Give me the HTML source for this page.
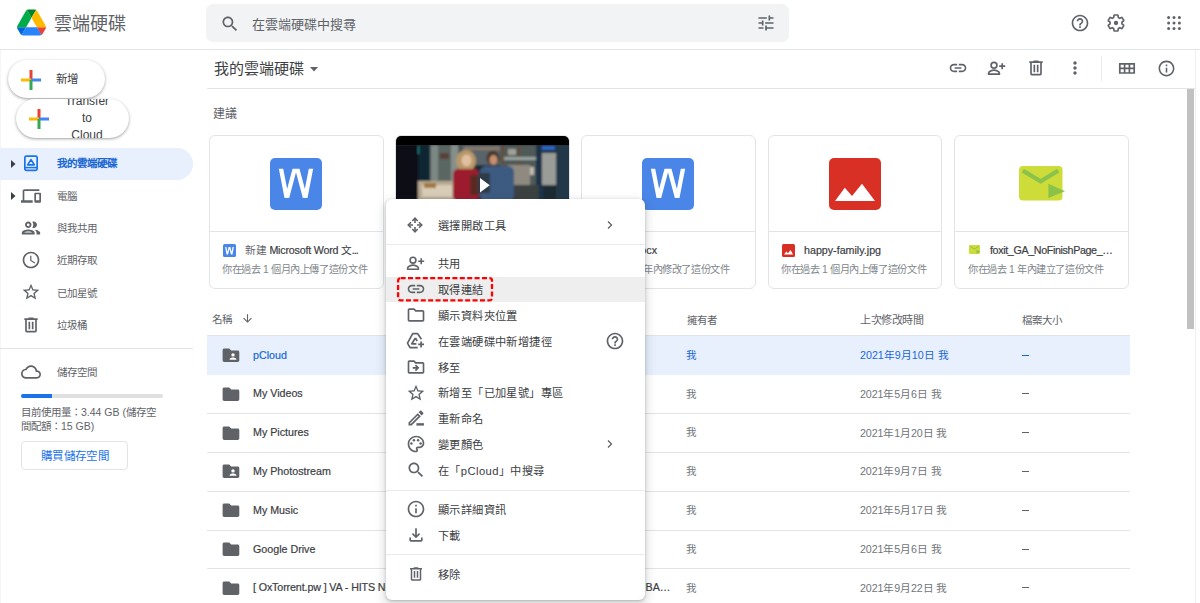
<!DOCTYPE html>
<html lang="zh-TW">
<head>
<meta charset="utf-8">
<style>
*{box-sizing:border-box;margin:0;padding:0}
html,body{width:1200px;height:603px;overflow:hidden;background:#fff}
body{position:relative;font-family:"Liberation Sans",sans-serif;color:#3c4043}
.a{position:absolute}
.t{position:absolute;white-space:nowrap;line-height:1}
svg{position:absolute;display:block}
.ic{fill:#5f6368}
</style>
</head>
<body>
<!-- left edge line -->
<div class="a" style="left:0;top:49px;width:1px;height:554px;background:#f5f5f5"></div>
<!-- header -->
<svg style="left:17px;top:9px" width="29" height="27" viewBox="0 0 87.3 78">
<path d="m6.6 66.85 3.85 6.65c.8 1.4 1.95 2.5 3.3 3.3l13.75-23.8h-27.5c0 1.55.4 3.1 1.2 4.5z" fill="#0066da"/>
<path d="m43.65 25-13.75-23.8c-1.35.8-2.5 1.9-3.3 3.3l-25.4 44a9.06 9.06 0 0 0 -1.2 4.5h27.5z" fill="#00ac47"/>
<path d="m73.55 76.8c1.35-.8 2.5-1.9 3.3-3.3l1.6-2.75 7.65-13.25c.8-1.4 1.2-2.95 1.2-4.5h-27.502l5.852 11.5z" fill="#ea4335"/>
<path d="m43.65 25 13.75-23.8c-1.35-.8-2.9-1.2-4.5-1.2h-18.5c-1.6 0-3.15.45-4.5 1.2z" fill="#00832d"/>
<path d="m59.8 53h-32.3l-13.75 23.8c1.35.8 2.9 1.2 4.5 1.2h50.8c1.6 0 3.15-.45 4.5-1.2z" fill="#2684fc"/>
<path d="m73.4 26.5-12.7-22c-.8-1.4-1.95-2.5-3.3-3.3l-13.75 23.8 16.15 28h27.45c0-1.55-.4-3.1-1.2-4.5z" fill="#ffba00"/>
</svg>
<div class="t" style="left:54px;top:14.5px;font-size:18px;color:#5f6368">雲端硬碟</div>

<div class="a" style="left:206px;top:4px;width:583px;height:38px;background:#f1f3f4;border-radius:7px"></div>
<svg style="left:219.5px;top:13.5px" width="20" height="20" viewBox="0 0 24 24"><path class="ic" d="M15.5 14h-.79l-.28-.27C15.41 12.59 16 11.11 16 9.5 16 5.91 13.09 3 9.5 3S3 5.91 3 9.5 5.91 16 9.5 16c1.61 0 3.090-.59 4.23-1.57l.27.28v.79l5 4.99L20.49 19l-4.99-5zm-6 0C7.01 14 5 11.99 5 9.5S7.010 5 9.5 5 14 7.01 14 9.5 11.99 14 9.5 14z"/></svg>
<div class="t" style="left:252px;top:17.5px;font-size:13px;color:#5f6368">在雲端硬碟中搜尋</div>
<svg style="left:756px;top:13px" width="20" height="20" viewBox="0 0 24 24"><path class="ic" d="M3 17v2h6v-2H3zM3 5v2h10V5H3zm10 16v-2h8v-2h-8v-2h-2v6h2zM7 9v2H3v2h4v2h2V9H7zm14 4v-2H11v2h10zm-6-4h2V7h4V5h-4V3h-2v6z"/></svg>

<svg style="left:1070px;top:13px" width="20" height="20" viewBox="0 0 24 24"><path class="ic" d="M11 18h2v-2h-2v2zm1-16C6.48 2 2 6.48 2 12s4.48 10 10 10 10-4.48 10-10S17.52 2 12 2zm0 18c-4.41 0-8-3.59-8-8s3.59-8 8-8 8 3.59 8 8-3.590 8-8 8zm0-14c-2.21 0-4 1.79-4 4h2c0-1.1.9-2 2-2s2 .9 2 2c0 2-3 1.75-3 5h2c0-2.25 3-2.5 3-5 0-2.21-1.79-4-4-4z"/></svg>
<svg style="left:1106px;top:13px" width="20" height="20" viewBox="0 0 24 24"><path fill="none" stroke="#5f6368" stroke-width="2" d="M19.14 12.94c.04-.3.06-.61.06-.94 0-.32-.02-.64-.07-.94l2.03-1.58c.18-.14.23-.41.12-.61l-1.92-3.32c-.12-.22-.37-.29-.59-.22l-2.39.96c-.5-.38-1.03-.7-1.62-.94l-.36-2.54c-.04-.24-.24-.41-.48-.41h-3.84c-.24 0-.43.17-.47.41l-.36 2.540c-.59.24-1.13.57-1.62.94l-2.39-.96c-.22-.08-.47 0-.59.22L2.74 8.87c-.12.21-.08.47.12.61l2.03 1.58c-.05.3-.09.63-.09.94s.02.64.07.94l-2.03 1.58c-.18.14-.23.41-.12.61l1.92 3.32c.12.22.37.29.59.22l2.39-.96c.5.38 1.03.7 1.62.94l.36 2.54c.05.24.24.41.48.41h3.84c.24 0 .44-.17.47-.41l.36-2.54c.59-.24 1.13-.56 1.62-.94l2.39.96c.22.08.47 0 .59-.22l1.92-3.32c.12-.22.07-.47-.12-.61l-2.01-1.58z"/><circle cx="12" cy="12" r="2.6" fill="#5f6368"/></svg>
<svg style="left:1167px;top:16px" width="14" height="14" viewBox="0 0 14 14" fill="#5f6368"><circle cx="1.6" cy="1.6" r="1.5"/><circle cx="7" cy="1.6" r="1.5"/><circle cx="12.4" cy="1.6" r="1.5"/><circle cx="1.6" cy="7" r="1.5"/><circle cx="7" cy="7" r="1.5"/><circle cx="12.4" cy="7" r="1.5"/><circle cx="1.6" cy="12.4" r="1.5"/><circle cx="7" cy="12.4" r="1.5"/><circle cx="12.4" cy="12.4" r="1.5"/></svg>

<div class="a" style="left:0;top:49px;width:1200px;height:1px;background:#e2e4e7"></div>

<!-- SIDEBAR -->
<!-- new button -->
<div class="a" style="left:8px;top:60px;width:97px;height:38px;border-radius:19px;background:#fff;box-shadow:0 1px 2px 0 rgba(60,64,67,.30),0 1px 3px 1px rgba(60,64,67,.15)"></div>
<svg style="left:21px;top:70px" width="20" height="20" viewBox="0 0 20 20"><rect x="8.5" y="0" width="3" height="10" fill="#ea4335"/><rect x="0" y="8.5" width="10" height="3" fill="#fbbc04"/><rect x="10" y="8.5" width="10" height="3" fill="#4285f4"/><rect x="8.5" y="10" width="3" height="10" fill="#34a853"/></svg>
<div class="t" style="left:56px;top:74px;font-size:11.5px;color:#3c4043">新增</div>
<!-- transfer button -->
<div class="a" style="left:16px;top:99px;width:113px;height:39px;border-radius:20px;background:#fff;box-shadow:0 1px 2px 0 rgba(60,64,67,.30),0 1px 3px 1px rgba(60,64,67,.15);overflow:hidden">
<div style="position:absolute;left:40px;top:-6.1px;width:62px;text-align:center;font-size:12px;line-height:17.2px;color:#3c4043">Transfer<br>to<br>Cloud</div>
</div>
<svg style="left:29px;top:109px" width="20" height="20" viewBox="0 0 20 20"><rect x="8.5" y="0" width="3" height="10" fill="#ea4335"/><rect x="0" y="8.5" width="10" height="3" fill="#fbbc04"/><rect x="10" y="8.5" width="10" height="3" fill="#4285f4"/><rect x="8.5" y="10" width="3" height="10" fill="#34a853"/></svg>

<!-- nav -->
<div class="a" style="left:0;top:148px;width:193px;height:32px;background:#e8f0fe;border-radius:0 16px 16px 0"></div>
<svg style="left:10px;top:159px" width="6" height="10" viewBox="0 0 6 10"><path d="M1 1l4.5 4L1 9z" fill="#3c4043"/></svg>
<svg style="left:23px;top:154px" width="16" height="18" viewBox="0 0 16 18"><rect x="1.85" y="2.05" width="12.3" height="14.4" rx="1.6" fill="none" stroke="#1a73e8" stroke-width="1.7"/><path d="M1.85 13.6h12.3" stroke="#1a73e8" stroke-width="1.5"/><path d="M8 5.6L11.3 10.9H4.7z" fill="none" stroke="#1a73e8" stroke-width="1.7" stroke-linejoin="round"/></svg>
<div class="t" style="left:57px;top:158px;font-size:10.5px;color:#1967d2;font-weight:700">我的雲端硬碟</div>

<svg style="left:10px;top:191px" width="6" height="10" viewBox="0 0 6 10"><path d="M1 1l4.5 4L1 9z" fill="#3c4043"/></svg>
<svg style="left:21px;top:186px" width="20" height="20" viewBox="0 0 24 24"><path class="ic" d="M4 6h18V4H4c-1.1 0-2 .9-2 2v11H0v3h14v-3H4V6zm19 2h-6c-.55 0-1 .45-1 1v10c0 .55.45 1 1 1h6c.55 0 1-.45 1-1V9c0-.55-.45-1-1-1zm-1 9h-4v-7h4v7z"/></svg>
<div class="t" style="left:57px;top:191px;font-size:10.5px;color:#5f6368">電腦</div>

<svg style="left:20px;top:217px" width="22" height="22" viewBox="0 0 24 24"><path class="ic" d="M9 13.75c-2.34 0-7 1.17-7 3.5V19h14v-1.75c0-2.33-4.66-3.5-7-3.5zM4.34 17c.84-.58 2.87-1.25 4.66-1.25s3.82.67 4.66 1.25H4.34zM9 12c1.93 0 3.5-1.57 3.5-3.5S10.93 5 9 5 5.5 6.57 5.5 8.5 7.07 12 9 12zm0-5c.83 0 1.5.67 1.5 1.5S9.83 10 9 10s-1.5-.67-1.5-1.5S8.17 7 9 7zm7.04 6.81c1.16.84 1.96 1.96 1.96 3.44V19h4v-1.75c0-2.02-3.5-3.17-5.96-3.44zM15 12c1.93 0 3.5-1.57 3.5-3.5S16.93 5 15 5c-.54 0-1.04.13-1.5.35.63.89 1 1.98 1 3.15s-.37 2.26-1 3.15c.46.22.96.35 1.5.35z"/></svg>
<div class="t" style="left:57px;top:223px;font-size:10.5px;color:#5f6368">與我共用</div>

<svg style="left:21px;top:250px" width="20" height="20" viewBox="0 0 24 24"><path class="ic" d="M11.99 2C6.47 2 2 6.48 2 12s4.47 10 9.99 10C17.52 22 22 17.52 22 12S17.52 2 11.99 2zM12 20c-4.42 0-8-3.58-8-8s3.58-8 8-8 8 3.58 8 8-3.58 8-8 8zm.5-13H11v6l5.25 3.15.75-1.23-4.5-2.67z"/></svg>
<div class="t" style="left:57px;top:255px;font-size:10.5px;color:#5f6368">近期存取</div>

<svg style="left:21px;top:282px" width="20" height="20" viewBox="0 0 24 24"><path class="ic" d="M22 9.24l-7.19-.62L12 2 9.19 8.63 2 9.24l5.46 4.73L5.82 21 12 17.27 18.18 21l-1.63-7.03L22 9.24zM12 15.4l-3.76 2.27 1-4.28-3.32-2.88 4.38-.38L12 6.1l1.71 4.04 4.38.38-3.32 2.88 1 4.28L12 15.4z"/></svg>
<div class="t" style="left:57px;top:288px;font-size:10.5px;color:#5f6368">已加星號</div>

<svg style="left:21px;top:315px" width="20" height="20" viewBox="0 0 24 24"><path class="ic" d="M15 4V3H9v1H4v2h1v13c0 1.1.9 2 2 2h10c1.1 0 2-.9 2-2V6h1V4h-5zm2 15H7V6h10v13zM9 8h2v9H9zm4 0h2v9h-2z"/></svg>
<div class="t" style="left:57px;top:320px;font-size:10.5px;color:#5f6368">垃圾桶</div>

<div class="a" style="left:0;top:348px;width:193px;height:1px;background:#e2e4e7"></div>

<svg style="left:21px;top:362px" width="20" height="20" viewBox="0 0 24 24"><path class="ic" d="M19.35 10.04C18.67 6.59 15.64 4 12 4 9.11 4 6.6 5.64 5.35 8.04 2.34 8.36 0 10.91 0 14c0 3.31 2.69 6 6 6h13c2.76 0 5-2.24 5-5 0-2.64-2.05-4.78-4.65-4.96zM19 18H6c-2.21 0-4-1.79-4-4 0-2.05 1.53-3.76 3.56-3.97l1.07-.11.5-.95C8.08 7.14 9.94 6 12 6c2.62 0 4.88 1.86 5.39 4.43l.3 1.5 1.53.11c1.56.1 2.78 1.41 2.78 2.96 0 1.65-1.35 3-3 3z"/></svg>
<div class="t" style="left:57px;top:367px;font-size:10.5px;color:#5f6368">儲存空間</div>
<div class="a" style="left:21px;top:394px;width:142px;height:4px;background:#e0e0e0;border-radius:2px"></div>
<div class="a" style="left:21px;top:394px;width:31px;height:4px;background:#1a73e8;border-radius:2px 0 0 2px"></div>
<div class="t" style="left:21px;top:405px;font-size:10.5px;line-height:14px;color:#5f6368">目前使用量：3.44 GB (儲存空<br>間配額：15 GB)</div>
<div class="a" style="left:21px;top:441px;width:107px;height:29px;border:1px solid #e2e4e7;border-radius:4px"></div>
<div class="t" style="left:41px;top:451px;font-size:11.5px;letter-spacing:0.35px;color:#1a73e8">購買儲存空間</div>

<!-- MAIN -->
<!-- title row -->
<div class="t" style="left:214px;top:61px;font-size:15px;color:#3c4043">我的雲端硬碟</div>
<svg style="left:308px;top:65px" width="12" height="8" viewBox="0 0 12 8"><path d="M2 2h8l-4 4.5z" fill="#5f6368"/></svg>
<svg style="left:948px;top:58px" width="20" height="20" viewBox="0 0 24 24"><path class="ic" d="M3.9 12c0-1.71 1.39-3.1 3.1-3.1h4V7H7c-2.76 0-5 2.24-5 5s2.24 5 5 5h4v-1.9H7c-1.71 0-3.1-1.39-3.1-3.1zM8 13h8v-2H8v2zm9-6h-4v1.9h4c1.71 0 3.1 1.39 3.1 3.1s-1.39 3.1-3.1 3.1h-4V17h4c2.76 0 5-2.24 5-5s-2.24-5-5-5z"/></svg>
<svg style="left:987px;top:59px" width="20" height="20" viewBox="0 0 20 20"><circle cx="7" cy="6.2" r="2.9" fill="none" stroke="#5f6368" stroke-width="1.7"/><path d="M1.6 15.2v-1c0-1.9 3.6-3.1 5.4-3.1s5.4 1.2 5.4 3.1v1z" fill="none" stroke="#5f6368" stroke-width="1.7" stroke-linejoin="round"/><path d="M15.2 4.2v6M12.2 7.2h6" stroke="#5f6368" stroke-width="1.7"/></svg>
<svg style="left:1026px;top:58px" width="20" height="20" viewBox="0 0 24 24"><path class="ic" d="M15 4V3H9v1H4v2h1v13c0 1.1.9 2 2 2h10c1.1 0 2-.9 2-2V6h1V4h-5zm2 15H7V6h10v13zM9 8h2v9H9zm4 0h2v9h-2z"/></svg>
<svg style="left:1065px;top:58px" width="20" height="20" viewBox="0 0 24 24"><path class="ic" d="M12 8c1.1 0 2-.9 2-2s-.9-2-2-2-2 .9-2 2 .9 2 2 2zm0 2c-1.1 0-2 .9-2 2s.9 2 2 2 2-.9 2-2-.9-2-2-2zm0 6c-1.1 0-2 .9-2 2s.9 2 2 2 2-.9 2-2-.9-2-2-2z"/></svg>
<div class="a" style="left:1101px;top:56px;width:1px;height:25px;background:#e8eaed"></div>
<svg style="left:1118px;top:62px" width="18" height="13" viewBox="0 0 18 13"><path d="M1.8 1.8h14.4v9.2H1.8zM1.8 6.4h14.4M6.6 1.8v9.2M11.4 1.8v9.2" fill="none" stroke="#5f6368" stroke-width="1.7"/></svg>
<svg style="left:1156.5px;top:58.5px" width="19" height="19" viewBox="0 0 24 24"><path class="ic" d="M11 7h2v2h-2zm0 4h2v6h-2zm1-9C6.48 2 2 6.48 2 12s4.48 10 10 10 10-4.48 10-10S17.52 2 12 2zm0 18c-4.41 0-8-3.59-8-8s3.59-8 8-8 8 3.59 8 8-3.59 8-8 8z"/></svg>
<div class="a" style="left:207px;top:88px;width:988px;height:1px;background:#e2e4e7"></div>
<div class="a" style="left:1195px;top:50px;width:1px;height:553px;background:#f0f0f0"></div>
<div class="a" style="left:1187px;top:89px;width:7px;height:240px;background:#c1c1c1"></div>

<div class="t" style="left:213px;top:108px;font-size:12px;color:#5f6368">建議</div>

<!-- cards -->
<div class="a card" style="left:209px;top:135px;width:175px;height:154px;border:1px solid #e2e4e7;border-radius:6px"></div>
<div class="a" style="left:209px;top:231px;width:175px;height:1px;background:#e2e4e7"></div>
<svg style="left:270px;top:158px" width="52" height="52" viewBox="0 0 52 52"><defs><clipPath id="wc270"><rect x="0" y="10.7" width="52" height="29.2"/></clipPath></defs><rect width="52" height="52" rx="5" fill="#4a86e8"/><polyline clip-path="url(#wc270)" points="10.1,6 16.8,40.5 26,6 35.2,40.5 41.9,6" fill="none" stroke="#fff" stroke-width="4.3" stroke-linejoin="miter"/></svg>
<svg style="left:223px;top:244px" width="13" height="13" viewBox="0 0 13 13"><defs><clipPath id="wcs"><rect x="0" y="3" width="13" height="7.5"/></clipPath></defs><rect width="13" height="13" rx="1.5" fill="#4a86e8"/><polyline clip-path="url(#wcs)" points="2.6,2 4.3,11 6.5,2 8.7,11 10.4,2" fill="none" stroke="#fff" stroke-width="1.3"/></svg>
<div class="t" style="left:245px;top:245px;font-size:10.7px;letter-spacing:-0.2px;color:#3c4043;font-weight:500;-webkit-text-stroke:0.2px #3c4043"><span style="color:#5f6368;-webkit-text-stroke:0">新建</span> Microsoft Word <span style="-webkit-text-stroke:0">文</span><span style="letter-spacing:-1px">...</span></div>
<div class="t" style="left:222px;top:265px;font-size:10.2px;letter-spacing:-0.35px;color:#80868b">你在過去 1 個月內上傳了這份文件</div>

<div class="a" style="left:581px;top:135px;width:175px;height:154px;border:1px solid #e2e4e7;border-radius:6px"></div>
<div class="a" style="left:581px;top:231px;width:175px;height:1px;background:#e2e4e7"></div>
<svg style="left:642px;top:158px" width="52" height="52" viewBox="0 0 52 52"><defs><clipPath id="wc642"><rect x="0" y="10.7" width="52" height="29.2"/></clipPath></defs><rect width="52" height="52" rx="5" fill="#4a86e8"/><polyline clip-path="url(#wc642)" points="10.1,6 16.8,40.5 26,6 35.2,40.5 41.9,6" fill="none" stroke="#fff" stroke-width="4.3" stroke-linejoin="miter"/></svg>
<div class="t" style="left:557px;top:245px;width:100px;text-align:right;font-size:10.7px;color:#3c4043;font-weight:500;-webkit-text-stroke:0.2px #3c4043">報告文件.docx</div>
<div class="t" style="left:594px;top:265px;font-size:10.2px;letter-spacing:-0.35px;color:#80868b">你在過去 1 年內修改了這份文件</div>

<div class="a" style="left:768px;top:135px;width:174px;height:154px;border:1px solid #e2e4e7;border-radius:6px"></div>
<div class="a" style="left:768px;top:231px;width:174px;height:1px;background:#e2e4e7"></div>
<svg style="left:829px;top:158px" width="52" height="52" viewBox="0 0 52 52"><rect width="52" height="52" rx="5" fill="#d93025"/><path d="M6 43L15.8 29.8 23 38 33 25.7 46 43z" fill="#fff"/></svg>
<svg style="left:782px;top:244px" width="13" height="13" viewBox="0 0 13 13"><rect width="13" height="13" rx="1.5" fill="#d93025"/><path d="M2 10.5L4.3 7.5 6 9.3 8.6 6 11 10.5z" fill="#fff"/></svg>
<div class="t" style="left:804px;top:245px;font-size:10.7px;color:#3c4043;font-weight:500;-webkit-text-stroke:0.2px #3c4043">happy-family.jpg</div>
<div class="t" style="left:781px;top:265px;font-size:10.2px;letter-spacing:-0.35px;color:#80868b">你在過去 1 個月內上傳了這份文件</div>

<div class="a" style="left:954px;top:135px;width:175px;height:154px;border:1px solid #e2e4e7;border-radius:6px"></div>
<div class="a" style="left:954px;top:231px;width:175px;height:1px;background:#e2e4e7"></div>
<svg style="left:1019px;top:166px" width="47" height="35" viewBox="0 0 47 35"><rect x="0" y="0" width="43.5" height="34.4" rx="4" fill="#cddc39"/><path d="M3.8 4.6L21.7 15.3 39.2 4.6" fill="none" stroke="#8bc34a" stroke-width="4.2"/><path d="M29.4 17.7L46 25.3 29.4 32z" fill="#8bc34a"/></svg>
<svg style="left:969px;top:245px" width="12" height="10" viewBox="0 0 12 10"><rect width="11" height="9" rx="1.2" fill="#cddc39"/><path d="M1.2 1.3L5.5 4 9.8 1.3" fill="none" stroke="#8bc34a" stroke-width="1"/><path d="M7.5 4.8L11.5 6.8 7.5 8.6z" fill="#8bc34a"/></svg>
<div class="t" style="left:990px;top:245px;font-size:10.7px;letter-spacing:-0.35px;color:#3c4043;font-weight:500;-webkit-text-stroke:0.2px #3c4043">foxit_GA_NoFinishPage_…</div>
<div class="t" style="left:968px;top:265px;font-size:10.2px;letter-spacing:-0.35px;color:#80868b">你在過去 1 年內建立了這份文件</div>

<!-- video card -->
<div class="a" style="left:395px;top:135px;width:175px;height:154px;border:1px solid #e2e4e7;border-radius:6px;overflow:hidden">
<div class="a" style="left:0;top:0;width:175px;height:64px;background:#000"></div>
<svg style="left:0;top:9.4px" width="175" height="54.6" viewBox="0 0 175 54.6"><defs><filter id="vb" x="-5%" y="-5%" width="110%" height="110%"><feGaussianBlur stdDeviation="0.9"/></filter></defs>
<g filter="url(#vb)">
<rect x="-2" y="-2" width="180" height="60" fill="#1e2a30"/>
<rect x="10" y="0" width="28" height="40" fill="#0f2530"/>
<rect x="11" y="1" width="12" height="8" fill="#2f8a8a"/>
<rect x="34" y="0" width="30" height="36" fill="#5a6662"/>
<rect x="35" y="0" width="7" height="38" fill="#7c8884"/>
<rect x="55" y="0" width="7" height="36" fill="#85908a"/>
<rect x="44" y="8" width="9" height="6" fill="#5a4038"/>
<rect x="65" y="0" width="40" height="20" fill="#59636a"/>
<rect x="68" y="2" width="36" height="3" fill="#8a7a66"/>
<rect x="104" y="0" width="36" height="42" fill="#4f5a58"/><rect x="106" y="0" width="2" height="20" fill="#6a4a30"/><rect x="122" y="0" width="2" height="20" fill="#6a4a30"/><rect x="112" y="4" width="8" height="6" fill="#a0a098"/><rect x="126" y="22" width="12" height="8" fill="#c0bab0"/>
<rect x="108" y="12" width="32" height="3" fill="#9aa5a0"/>
<rect x="112" y="20" width="22" height="22" fill="#8f8a80"/>
<rect x="140" y="0" width="8" height="54" fill="#1a3048"/>
<rect x="146" y="1" width="13" height="4" fill="#2a66c0"/>
<rect x="146" y="8" width="14" height="32" fill="#9a9c98"/>
<rect x="160" y="0" width="15" height="54" fill="#24384a"/>
<rect x="18" y="36" width="42" height="20" fill="#b8a890"/>
<rect x="26" y="40" width="30" height="12" fill="#d8ccb8"/>
<rect x="28" y="38" width="12" height="5" fill="#a07840"/>
<rect x="-2" y="0" width="24" height="56" fill="#0a0f16"/>
<ellipse cx="70" cy="16" rx="10" ry="11" fill="#b89868"/>
<ellipse cx="70.5" cy="15.5" rx="5" ry="6" fill="#e0c0a0"/>
<rect x="57" y="24" width="26" height="32" rx="5" fill="#9c1f2e"/>
<rect x="74" y="30" width="10" height="20" fill="#5a2a22"/>
<ellipse cx="97" cy="13" rx="6.5" ry="7" fill="#4a3428"/>
<ellipse cx="97.5" cy="15" rx="4" ry="5" fill="#c49070"/>
<rect x="84" y="21" width="34" height="36" rx="6" fill="#3d5a80"/>
<rect x="82" y="28" width="12" height="20" fill="#2e3a48"/>
<rect x="118" y="40" width="25" height="16" fill="#3a4040"/>
</g></svg>
<svg style="left:83.5px;top:41.5px" width="11" height="15" viewBox="0 0 11 15"><path d="M0 0L9.8 7.2 0 14.4z" fill="#fff"/></svg>
</div>
<div class="a" style="left:395px;top:231px;width:175px;height:1px;background:#e2e4e7"></div>
<div class="t" style="left:212px;top:314px;font-size:10.5px;color:#5f6368">名稱</div>
<svg style="left:241px;top:312px" width="13" height="13" viewBox="0 0 24 24"><path d="M20 12l-1.41-1.41L13 16.17V4h-2v12.17l-5.58-5.59L4 12l8 8 8-8z" fill="#5f6368"/></svg>
<div class="t" style="left:687px;top:314.5px;font-size:10.5px;color:#5f6368">擁有者</div>
<div class="t" style="left:860px;top:314.5px;font-size:11px;letter-spacing:-0.4px;color:#5f6368">上次修改時間</div>
<div class="t" style="left:1022px;top:314.5px;font-size:10.5px;color:#5f6368">檔案大小</div>

<div class="a" style="left:207px;top:334.5px;width:923px;height:40px;background:#e8f0fe;border-top:1px solid #e2e4e7"></div>
<svg style="left:222px;top:347.0px" width="18" height="16" viewBox="0 0 18 16"><path d="M7.2 1.5H2.2C1.3 1.5.6 2.2.6 3.1v10.2c0 .9.7 1.6 1.6 1.6h13.5c.9 0 1.6-.7 1.6-1.6V5.2c0-.9-.7-1.6-1.6-1.6H9.2z" fill="#5f6368"/><circle cx="11" cy="7.9" r="1.7" fill="#fff"/><path d="M7.6 12.8v-.6c0-1.1 2.3-1.7 3.4-1.7s3.4.6 3.4 1.7v.6z" fill="#fff"/></svg>
<div class="t" style="left:253px;top:349.5px;font-size:10.7px;color:#1967d2;font-weight:500;-webkit-text-stroke:0.2px #1967d2">pCloud</div>
<div class="t" style="left:686px;top:349.8px;font-size:10.5px;color:#1967d2">我</div>
<div class="t" style="left:860px;top:350.0px;font-size:10.7px;color:#1967d2">2021年9月10日 我</div>
<div class="a" style="left:1022px;top:354.5px;width:6.5px;height:1px;background:#1967d2"></div>

<svg style="left:222px;top:385.8px" width="18" height="16" viewBox="0 0 18 16"><path d="M7.2 1.5H2.2C1.3 1.5.6 2.2.6 3.1v10.2c0 .9.7 1.6 1.6 1.6h13.5c.9 0 1.6-.7 1.6-1.6V5.2c0-.9-.7-1.6-1.6-1.6H9.2z" fill="#5f6368"/></svg>
<div class="t" style="left:253px;top:388.3px;font-size:10.7px;color:#3c4043;font-weight:500;-webkit-text-stroke:0.2px #3c4043">My Videos</div>
<div class="t" style="left:686px;top:388.6px;font-size:10.5px;color:#70757a">我</div>
<div class="t" style="left:860px;top:388.8px;font-size:10.7px;letter-spacing:-0.1px;color:#70757a">2021年5月6日 我</div>
<div class="a" style="left:1022px;top:393.3px;width:6.5px;height:1px;background:#5f6368"></div>
<div class="a" style="left:207px;top:413.1px;width:923px;height:1px;background:#e2e4e7"></div>
<svg style="left:222px;top:424.6px" width="18" height="16" viewBox="0 0 18 16"><path d="M7.2 1.5H2.2C1.3 1.5.6 2.2.6 3.1v10.2c0 .9.7 1.6 1.6 1.6h13.5c.9 0 1.6-.7 1.6-1.6V5.2c0-.9-.7-1.6-1.6-1.6H9.2z" fill="#5f6368"/></svg>
<div class="t" style="left:253px;top:427.1px;font-size:10.7px;color:#3c4043;font-weight:500;-webkit-text-stroke:0.2px #3c4043">My Pictures</div>
<div class="t" style="left:686px;top:427.4px;font-size:10.5px;color:#70757a">我</div>
<div class="t" style="left:860px;top:427.6px;font-size:10.7px;letter-spacing:-0.1px;color:#70757a">2021年1月20日 我</div>
<div class="a" style="left:1022px;top:432.1px;width:6.5px;height:1px;background:#5f6368"></div>
<div class="a" style="left:207px;top:451.9px;width:923px;height:1px;background:#e2e4e7"></div>
<svg style="left:222px;top:463.4px" width="18" height="16" viewBox="0 0 18 16"><path d="M7.2 1.5H2.2C1.3 1.5.6 2.2.6 3.1v10.2c0 .9.7 1.6 1.6 1.6h13.5c.9 0 1.6-.7 1.6-1.6V5.2c0-.9-.7-1.6-1.6-1.6H9.2z" fill="#5f6368"/><circle cx="11" cy="7.9" r="1.7" fill="#fff"/><path d="M7.6 12.8v-.6c0-1.1 2.3-1.7 3.4-1.7s3.4.6 3.4 1.7v.6z" fill="#fff"/></svg>
<div class="t" style="left:253px;top:465.9px;font-size:10.7px;color:#3c4043;font-weight:500;-webkit-text-stroke:0.2px #3c4043">My Photostream</div>
<div class="t" style="left:686px;top:466.2px;font-size:10.5px;color:#70757a">我</div>
<div class="t" style="left:860px;top:466.4px;font-size:10.7px;letter-spacing:-0.1px;color:#70757a">2021年9月7日 我</div>
<div class="a" style="left:1022px;top:470.9px;width:6.5px;height:1px;background:#5f6368"></div>
<div class="a" style="left:207px;top:490.7px;width:923px;height:1px;background:#e2e4e7"></div>
<svg style="left:222px;top:502.2px" width="18" height="16" viewBox="0 0 18 16"><path d="M7.2 1.5H2.2C1.3 1.5.6 2.2.6 3.1v10.2c0 .9.7 1.6 1.6 1.6h13.5c.9 0 1.6-.7 1.6-1.6V5.2c0-.9-.7-1.6-1.6-1.6H9.2z" fill="#5f6368"/></svg>
<div class="t" style="left:253px;top:504.7px;font-size:10.7px;color:#3c4043;font-weight:500;-webkit-text-stroke:0.2px #3c4043">My Music</div>
<div class="t" style="left:686px;top:505.0px;font-size:10.5px;color:#70757a">我</div>
<div class="t" style="left:860px;top:505.2px;font-size:10.7px;letter-spacing:-0.1px;color:#70757a">2021年5月17日 我</div>
<div class="a" style="left:1022px;top:509.7px;width:6.5px;height:1px;background:#5f6368"></div>
<div class="a" style="left:207px;top:529.5px;width:923px;height:1px;background:#e2e4e7"></div>
<svg style="left:222px;top:541.0px" width="18" height="16" viewBox="0 0 18 16"><path d="M7.2 1.5H2.2C1.3 1.5.6 2.2.6 3.1v10.2c0 .9.7 1.6 1.6 1.6h13.5c.9 0 1.6-.7 1.6-1.6V5.2c0-.9-.7-1.6-1.6-1.6H9.2z" fill="#5f6368"/></svg>
<div class="t" style="left:253px;top:543.5px;font-size:10.7px;color:#3c4043;font-weight:500;-webkit-text-stroke:0.2px #3c4043">Google Drive</div>
<div class="t" style="left:686px;top:543.8px;font-size:10.5px;color:#70757a">我</div>
<div class="t" style="left:860px;top:544.0px;font-size:10.7px;letter-spacing:-0.1px;color:#70757a">2021年5月6日 我</div>
<div class="a" style="left:1022px;top:548.5px;width:6.5px;height:1px;background:#5f6368"></div>
<div class="a" style="left:207px;top:568.3px;width:923px;height:1px;background:#e2e4e7"></div>
<svg style="left:222px;top:579.8px" width="18" height="16" viewBox="0 0 18 16"><path d="M7.2 1.5H2.2C1.3 1.5.6 2.2.6 3.1v10.2c0 .9.7 1.6 1.6 1.6h13.5c.9 0 1.6-.7 1.6-1.6V5.2c0-.9-.7-1.6-1.6-1.6H9.2z" fill="#5f6368"/></svg>
<div class="t" style="left:253px;top:582.3px;font-size:10.7px;color:#3c4043;font-weight:500;letter-spacing:-0.12px;-webkit-text-stroke:0.2px #3c4043">[ OxTorrent.pw ] VA - HITS NI</div>
<div class="t" style="left:686px;top:582.6px;font-size:10.5px;color:#70757a">我</div>
<div class="t" style="left:860px;top:582.8px;font-size:10.7px;letter-spacing:-0.1px;color:#70757a">2021年9月22日 我</div>
<div class="a" style="left:1022px;top:587.3px;width:6.5px;height:1px;background:#5f6368"></div>
<div class="t" style="left:570.5px;top:582.1px;width:100px;text-align:right;font-size:10.7px;color:#3c4043;font-weight:500;-webkit-text-stroke:0.2px #3c4043">HBA…</div>
<!-- MENU -->
<div class="a" style="left:386px;top:199px;width:259px;height:401px;background:#fff;border-radius:6px;box-shadow:0 4px 8px 3px rgba(60,64,67,.15),0 1px 3px 0 rgba(60,64,67,.3)"></div>
<div class="a" style="left:386px;top:276.5px;width:259px;height:25.5px;background:#eeeeee"></div>
<div class="a" style="left:386px;top:244px;width:259px;height:1px;background:#e8eaed"></div>
<div class="a" style="left:386px;top:490px;width:259px;height:1px;background:#e8eaed"></div>
<div class="a" style="left:386px;top:554px;width:259px;height:1px;background:#e8eaed"></div>
<svg style="left:407.4px;top:216.8px" width="16" height="16" viewBox="0 0 16 16"><path d="M8 1.5V6M8 10V14.5M1.5 8H6M10 8H14.5" stroke="#5f6368" stroke-width="1.6"/><path d="M5.3 4L8 1.2 10.7 4M5.3 12L8 14.8 10.7 12M4 5.3L1.2 8 4 10.7M12 5.3L14.8 8 12 10.7" fill="none" stroke="#5f6368" stroke-width="1.5"/></svg>
<div class="t" style="left:438px;top:220.8px;font-size:11.25px;letter-spacing:0.4px;color:#3c4043">選擇開啟工具</div>
<svg style="left:605px;top:220.0px" width="10" height="10" viewBox="0 0 10 10"><path d="M3 1.5l3.5 3.5L3 8.5" fill="none" stroke="#5f6368" stroke-width="1.3"/></svg>
<svg style="left:405.5px;top:253.5px" width="20" height="20" viewBox="0 0 20 20"><circle cx="7" cy="6.2" r="2.9" fill="none" stroke="#5f6368" stroke-width="1.6"/><path d="M1.6 15.2v-1c0-1.9 3.6-3.1 5.4-3.1s5.4 1.2 5.4 3.1v1z" fill="none" stroke="#5f6368" stroke-width="1.6" stroke-linejoin="round"/><path d="M15.2 4.2v6M12.2 7.2h6" stroke="#5f6368" stroke-width="1.6"/></svg>
<div class="t" style="left:438px;top:259.3px;font-size:11.25px;letter-spacing:0.4px;color:#3c4043">共用</div>
<svg style="left:405.5px;top:279.3px" width="20" height="20" viewBox="0 0 24 24" fill="#5f6368"><path d="M3.9 12c0-1.71 1.39-3.1 3.1-3.1h4V7H7c-2.76 0-5 2.24-5 5s2.24 5 5 5h4v-1.9H7c-1.71 0-3.1-1.39-3.1-3.1zM8 13h8v-2H8v2zm9-6h-4v1.9h4c1.71 0 3.1 1.39 3.1 3.1s-1.39 3.1-3.1 3.1h-4V17h4c2.76 0 5-2.24 5-5s-2.24-5-5-5z"/></svg>
<div class="t" style="left:438px;top:285.1px;font-size:11.25px;letter-spacing:0.4px;color:#3c4043">取得連結</div>
<svg style="left:405.5px;top:305.1px" width="20" height="20" viewBox="0 0 24 24" fill="#5f6368"><path d="M9.17 6l2 2H20v10H4V6h5.17M10 4H4c-1.1 0-1.99.9-1.99 2L2 18c0 1.1.9 2 2 2h16c1.1 0 2-.9 2-2V8c0-1.1-.9-2-2-2h-8l-2-2z"/></svg>
<div class="t" style="left:438px;top:310.9px;font-size:11.25px;letter-spacing:0.4px;color:#3c4043">顯示資料夾位置</div>
<svg style="left:405px;top:331px" width="20" height="20" viewBox="0 0 20 20"><path d="M16.4 8.2L12.7 2.7H7.7L2.5 12.2 5 16.6H12.7" fill="none" stroke="#5f6368" stroke-width="1.7" stroke-linejoin="round"/><path d="M10.4 7L6.8 12.8H11.4M10.4 7L12.2 10" fill="none" stroke="#5f6368" stroke-width="1.7" stroke-linejoin="round"/><path d="M16.1 10.4V16.4M13.2 13.4H19" stroke="#5f6368" stroke-width="1.7"/></svg>
<div class="t" style="left:438px;top:336.7px;font-size:11.25px;letter-spacing:0.4px;color:#3c4043">在雲端硬碟中新增捷徑</div>
<svg style="left:605px;top:330.9px" width="20" height="20" viewBox="0 0 24 24" fill="#5f6368"><path d="M11 18h2v-2h-2v2zm1-16C6.48 2 2 6.48 2 12s4.48 10 10 10 10-4.48 10-10S17.52 2 12 2zm0 18c-4.41 0-8-3.59-8-8s3.59-8 8-8 8 3.59 8 8-3.59 8-8 8zm0-14c-2.21 0-4 1.79-4 4h2c0-1.1.9-2 2-2s2 .9 2 2c0 2-3 1.75-3 5h2c0-2.25 3-2.5 3-5 0-2.21-1.79-4-4-4z"/></svg>
<svg style="left:405.5px;top:356.7px" width="20" height="20" viewBox="0 0 24 24" fill="#5f6368"><path d="M20 6h-8l-2-2H4c-1.1 0-1.99.9-1.99 2L2 18c0 1.1.9 2 2 2h16c1.1 0 2-.9 2-2V8c0-1.1-.9-2-2-2zm0 12H4V6h5.17l2 2H20v10zm-7.84-6H8v2h4.16l-1.59 1.59L11.99 17 16 13.01 11.99 9l-1.41 1.41L12.16 12z"/></svg>
<div class="t" style="left:438px;top:362.5px;font-size:11.25px;letter-spacing:0.4px;color:#3c4043">移至</div>
<svg style="left:405.5px;top:382.5px" width="20" height="20" viewBox="0 0 24 24" fill="#5f6368"><path d="M22 9.24l-7.19-.62L12 2 9.19 8.63 2 9.24l5.46 4.73L5.82 21 12 17.27 18.18 21l-1.63-7.03L22 9.24zM12 15.4l-3.76 2.27 1-4.28-3.32-2.88 4.38-.38L12 6.1l1.71 4.04 4.38.38-3.32 2.88 1 4.28L12 15.4z"/></svg>
<div class="t" style="left:438px;top:388.3px;font-size:11.25px;letter-spacing:0.4px;color:#3c4043">新增至「已加星號」專區</div>
<svg style="left:405.5px;top:408.3px" width="20" height="20" viewBox="0 0 24 24" fill="#5f6368"><path d="M14.06 9.02l.92.92L5.92 19H5v-.92l9.06-9.06M17.66 3c-.25 0-.51.1-.7.29l-1.83 1.83 3.75 3.75 1.83-1.83c.39-.39.39-1.02 0-1.41l-2.34-2.34c-.2-.2-.45-.29-.71-.29zm-3.6 3.19L3 17.25V21h3.75L17.81 9.94l-3.75-3.75z"/><rect x="12.5" y="18.2" width="9" height="2.9"/></svg>
<div class="t" style="left:438px;top:414.1px;font-size:11.25px;letter-spacing:0.4px;color:#3c4043">重新命名</div>
<svg style="left:405.5px;top:434.1px" width="20" height="20" viewBox="0 0 24 24" fill="#5f6368"><path d="M12 22C6.49 22 2 17.51 2 12S6.49 2 12 2s10 4.04 10 9c0 3.31-2.69 6-6 6h-1.77c-.28 0-.5.22-.5.5 0 .12.05.23.13.33.41.47.64 1.06.64 1.67 0 1.38-1.12 2.5-2.5 2.5zm0-18c-4.41 0-8 3.59-8 8s3.59 8 8 8c.28 0 .5-.22.5-.5 0-.16-.08-.28-.14-.35-.41-.46-.63-1.05-.63-1.65 0-1.38 1.12-2.5 2.5-2.5H16c2.21 0 4-1.79 4-4 0-3.86-3.59-7-8-7z"/><circle cx="6.5" cy="11.5" r="1.5"/><circle cx="9.5" cy="7.5" r="1.5"/><circle cx="14.5" cy="7.5" r="1.5"/><circle cx="17.5" cy="11.5" r="1.5"/></svg>
<div class="t" style="left:438px;top:439.9px;font-size:11.25px;letter-spacing:0.4px;color:#3c4043">變更顏色</div>
<svg style="left:605px;top:439.1px" width="10" height="10" viewBox="0 0 10 10"><path d="M3 1.5l3.5 3.5L3 8.5" fill="none" stroke="#5f6368" stroke-width="1.3"/></svg>
<svg style="left:405.5px;top:459.9px" width="20" height="20" viewBox="0 0 24 24" fill="#5f6368"><path d="M15.5 14h-.79l-.28-.27C15.41 12.59 16 11.11 16 9.5 16 5.91 13.09 3 9.5 3S3 5.91 3 9.5 5.91 16 9.5 16c1.61 0 3.09-.59 4.23-1.57l.27.28v.79l5 4.99L20.49 19l-4.99-5zm-6 0C7.01 14 5 11.99 5 9.5S7.01 5 9.5 5 14 7.01 14 9.5 11.99 14 9.5 14z"/></svg>
<div class="t" style="left:438px;top:465.7px;font-size:11.25px;letter-spacing:0.4px;color:#3c4043">在「pCloud」中搜尋</div>
<svg style="left:405.5px;top:499.0px" width="20" height="20" viewBox="0 0 24 24" fill="#5f6368"><path d="M11 7h2v2h-2zm0 4h2v6h-2zm1-9C6.48 2 2 6.48 2 12s4.48 10 10 10 10-4.48 10-10S17.52 2 12 2zm0 18c-4.41 0-8-3.59-8-8s3.59-8 8-8 8 3.59 8 8-3.59 8-8 8z"/></svg>
<div class="t" style="left:438px;top:504.8px;font-size:11.25px;letter-spacing:0.4px;color:#3c4043">顯示詳細資訊</div>
<svg style="left:405.5px;top:525.2px" width="20" height="20" viewBox="0 0 24 24" fill="#5f6368"><path d="M18 15v3H6v-3H4v3c0 1.1.9 2 2 2h12c1.1 0 2-.9 2-2v-3h-2zm-1-4l-1.41-1.41L13 12.17V4h-2v8.17L8.41 9.59 7 11l5 5 5-5z"/></svg>
<div class="t" style="left:438px;top:531.0px;font-size:11.25px;letter-spacing:0.4px;color:#3c4043">下載</div>
<svg style="left:406.5px;top:564.7px" width="18" height="18" viewBox="0 0 24 24" fill="#5f6368"><path d="M15 4V3H9v1H4v2h1v13c0 1.1.9 2 2 2h10c1.1 0 2-.9 2-2V6h1V4h-5zm2 15H7V6h10v13zM9 8h2v9H9zm4 0h2v9h-2z"/></svg>
<div class="t" style="left:438px;top:569.5px;font-size:11.25px;letter-spacing:0.4px;color:#3c4043">移除</div>
<svg style="left:396px;top:275.5px" width="98" height="27" viewBox="0 0 98 27"><rect x="2.1" y="2.1" width="93.9" height="22.3" rx="2.5" fill="none" stroke="#f00" stroke-width="2.3" stroke-dasharray="5 2.4"/></svg>
</body>
</html>
